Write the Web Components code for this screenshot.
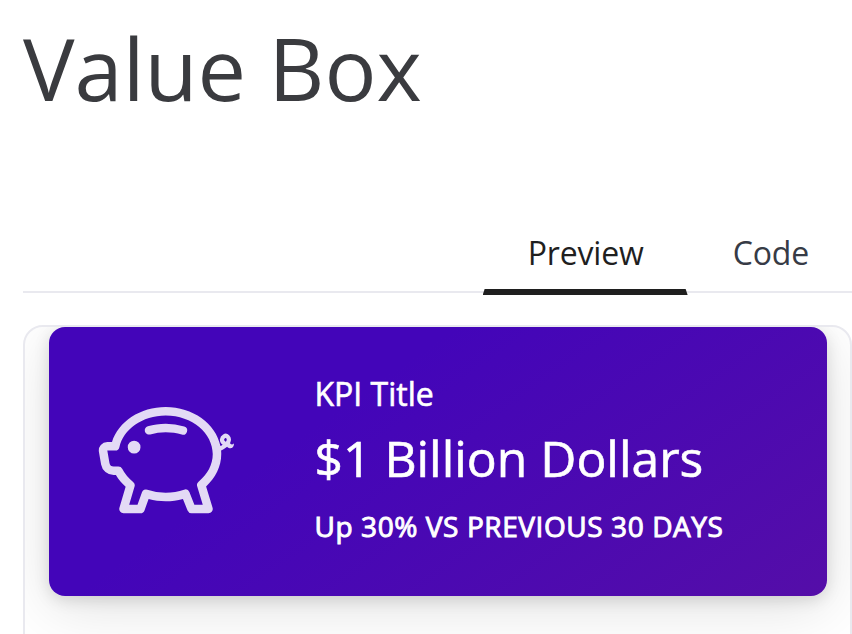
<!DOCTYPE html>
<html lang="en"><head><meta charset="utf-8"><title>Value Box</title>
<style>
html,body{margin:0;height:634px;overflow:hidden;background:#fff}
body{font-family:"Open Sans",sans-serif;color:#3a3a3d}
</style></head><body>
<component-page>
<span slot="title">Value Box</span>
<tab-bar slot="tabs"><tab-item active>Preview</tab-item><tab-item>Code</tab-item></tab-bar>
<preview-frame slot="preview">
<value-box><piggy-icon slot="showcase"></piggy-icon><span slot="title">KPI Title</span><span slot="value">$1 Billion Dollars</span><span slot="note">Up 30% VS PREVIOUS 30 DAYS</span></value-box>
</preview-frame>
</component-page>
<script>
function define(name, markup) {
  const template = document.createElement('template');
  template.innerHTML = markup;
  customElements.define(name, class extends HTMLElement {
    constructor() {
      super();
      this.attachShadow({mode: 'open'}).append(template.content.cloneNode(true));
    }
  });
}
define('component-page', `<style>
:host{display:flex;flex-direction:column;box-sizing:border-box;width:852px;height:634px;padding-left:23px;overflow:hidden}
h1{flex:none;margin:0;padding-top:15px;height:193px;box-sizing:border-box;font-size:86.5px;line-height:106px;font-weight:400;color:#3a3b3f;white-space:nowrap}
</style><h1><slot name="title"></slot></h1><slot name="tabs"></slot><slot name="preview"></slot>`);
define('tab-bar', `<style>
:host{display:flex;justify-content:flex-end;box-sizing:border-box;height:100px;flex:none;background:linear-gradient(#e9e9ef,#e9e9ef) 0 98px/100% 2px no-repeat}
</style><slot></slot>`);
define('tab-item', `<style>
:host{display:flex;flex-direction:column;box-sizing:border-box;height:102px;padding:36px 43px 0 45px;font-size:32px;line-height:48px;color:#373b46;white-space:nowrap;letter-spacing:-.15px}
:host([active]){color:#1f1f1f;width:205px}
i{display:none;margin:12px -43px 0 -45px;height:6px;background:#1f1f1f;clip-path:polygon(2px 0,calc(100% - 2px) 0,100% 100%,0 100%)}
:host([active]) i{display:block}
</style><span><slot></slot></span><i></i>`);
define('preview-frame', `<style>
:host{display:block;box-sizing:border-box;flex:none;width:829px;height:400px;margin-top:32px;padding:0 23px 0 24px;border:2px solid #e9e9ef;border-radius:20px;overflow:hidden;background:#fff}
</style><slot></slot>`);
define('value-box', `<style>
:host{display:grid;grid-template-columns:234px 1fr;align-items:center;box-sizing:border-box;height:269px;border-radius:16px;color:#fff;background:linear-gradient(145deg,#4305b9 35%,#5a10a3 120%);box-shadow:0 4px 16px rgba(0,0,0,.13),0 12px 60px rgba(0,0,0,.12)}
.show{display:flex;justify-content:center}
.text{display:flex;flex-direction:column;padding-left:31.5px;white-space:nowrap}
.title{font-size:32px;line-height:38px}
.value{font-size:49.8px;line-height:61px;margin:15px 0 16px}
.note{font-size:28px;line-height:43px;letter-spacing:.58px}
.title,.value{-webkit-text-stroke:.6px #fff}
.note{-webkit-text-stroke:.95px #fff}
</style><div class="show"><slot name="showcase"></slot></div><div class="text"><div class="title"><slot name="title"></slot></div><div class="value"><slot name="value"></slot></div><div class="note"><slot name="note"></slot></div></div>`);
define('piggy-icon', `<style>:host{display:block;width:136px;height:136px;color:#e3daf5}svg{display:block}</style>
<svg width="136" height="136" viewBox="0 0 16 16" fill="currentColor"><path d="M5 6.25a.75.75 0 1 1-1.5 0 .75.75 0 0 1 1.5 0zm1.138-1.496A6.613 6.613 0 0 1 7.964 4.5c.666 0 1.303.097 1.893.273a.5.5 0 0 0 .286-.958A7.602 7.602 0 0 0 7.964 3.5c-.734 0-1.441.103-2.102.292a.5.5 0 1 0 .276.962z"/><path fill-rule="evenodd" d="M7.964 1.527c-2.977 0-5.571 1.704-6.32 4.125h-.55A1 1 0 0 0 .11 6.824l.254 1.46a1.5 1.5 0 0 0 1.478 1.243h.263c.3.513.688.978 1.145 1.382l-.729 2.477a.5.5 0 0 0 .48.641h2a.5.5 0 0 0 .471-.332l.482-1.351c.635.173 1.31.267 2.011.267.707 0 1.388-.095 2.028-.272l.543 1.372a.5.5 0 0 0 .465.316h2a.5.5 0 0 0 .478-.645l-.761-2.506C13.81 9.895 14.5 8.559 14.5 7.069c0-.145-.007-.29-.02-.431.261-.11.508-.266.705-.444.315.306.815.306.815-.417 0 .223-.5.223-.461-.026a.95.95 0 0 0 .09-.255.7.7 0 0 0-.202-.645.58.58 0 0 0-.707-.098.735.735 0 0 0-.375.562c-.024.243.082.48.32.654a2.112 2.112 0 0 1-.259.153c-.534-2.664-3.284-4.595-6.442-4.595zM2.516 6.26c.455-2.066 2.667-3.733 5.448-3.733 3.146 0 5.536 2.114 5.536 4.542 0 1.254-.624 2.41-1.67 3.248a.5.5 0 0 0-.165.535l.66 2.175h-.985l-.59-1.487a.5.5 0 0 0-.629-.288c-.661.23-1.39.359-2.157.359a6.558 6.558 0 0 1-2.157-.359.5.5 0 0 0-.635.304l-.525 1.471h-.979l.633-2.15a.5.5 0 0 0-.17-.534 4.649 4.649 0 0 1-1.284-1.541.5.5 0 0 0-.446-.275h-.56a.5.5 0 0 1-.492-.414l-.254-1.46h.933a.5.5 0 0 0 .488-.393zm12.621-.857a.565.565 0 0 1-.098.21.704.704 0 0 1-.044-.025c-.146-.09-.157-.175-.152-.223a.236.236 0 0 1 .117-.173c.049-.027.08-.021.113.012a.202.202 0 0 1 .064.199z"/></svg>`);
</script></body></html>
